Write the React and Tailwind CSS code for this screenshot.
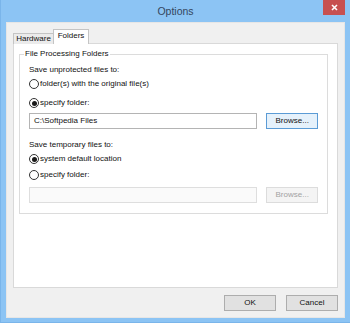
import { useState } from 'react';

function Radio({ checked, disabled, label }) {
  return (
    <div className="flex items-center h-[14px]">
      <span className="w-[10px] h-[10px] rounded-full border border-[#333] bg-white flex items-center justify-center shrink-0">
        {checked && <span className="w-[5px] h-[5px] rounded-full bg-[#1a1a1a]" />}
      </span>
      <span className={`ml-[1px] ${disabled ? 'text-[#8a8a8a]' : ''}`}>{label}</span>
    </div>
  );
}

function FolderRow({ value, disabled }) {
  return (
    <div className="flex items-center h-[16px]">
      <div
        className={`w-[230px] h-full border px-[4px] flex items-center ${
          disabled ? 'border-[#dedede] bg-[#fafafa]' : 'border-[#b4b4b4] bg-white'
        }`}
      >
        {value}
      </div>
      <button
        className={`ml-[9px] w-[52px] h-full border flex items-center justify-center ${
          disabled
            ? 'border-[#dcdcdc] bg-[#f4f4f4] text-[#a3a3a3]'
            : 'border-[#5b9bd5] bg-[#e5f1fb] text-[#111]'
        }`}
      >
        Browse...
      </button>
    </div>
  );
}

export default function App() {
  const [tab] = useState('folders');

  return (
    <div className="w-[350px] h-[323px] bg-[#8cc4f4] border-l border-b border-[#7ab5ea] flex flex-col font-['Liberation_Sans',Arial,sans-serif] text-[8px] text-[#111] leading-none overflow-hidden">
      {/* title bar */}
      <div className="h-[22px] relative flex items-center justify-center shrink-0">
        <span className="text-[10.5px] text-[#34465e]">Options</span>
        <button className="absolute top-0 right-[5px] w-[22px] h-[15px] bg-[#c75050] flex items-center justify-center">
          <svg width="7" height="7" viewBox="0 0 7 7">
            <path d="M1 1L6 6M6 1L1 6" stroke="white" strokeWidth="1.6" />
          </svg>
        </button>
      </div>

      {/* client area */}
      <div className="ml-[5px] mr-[5px] mb-[4px] flex-1 bg-[#f0f0f0] border border-[#e6e6e6] px-[6px] pt-[6px] flex flex-col">
        {/* tabs */}
        <div className="flex items-end h-[15px] relative z-10">
          <div className={`h-[11px] w-[41px] border border-b-0 border-[#c4c4c4] bg-[#ebebeb] flex items-center justify-center ${tab === 'hardware' ? 'bg-white' : ''}`}>
            Hardware
          </div>
          <div className="h-[15px] w-[36px] -ml-[1px] border border-b-0 border-[#c4c4c4] bg-white flex items-center justify-center pb-[2px]">
            Folders
          </div>
        </div>

        {/* tab panel */}
        <div className="-mt-[1px] h-[245px] w-[325px] bg-white border border-[#d9d9d9] px-[5px] pt-[10px]">
          <div className="relative border border-[#dcdcdc] h-[160px] w-[309px] px-[9px] pt-[8px]">
            <span className="absolute -top-[5px] left-[4px] bg-white px-[1px]">File Processing Folders</span>

            <div className="h-[14px] flex items-center">Save unprotected files to:</div>
            <Radio label="folder(s) with the original file(s)" />
            <div className="mt-[5px]">
              <Radio checked label="specify folder:" />
            </div>
            <div className="mt-[3px]">
              <FolderRow value="C:\Softpedia Files" />
            </div>

            <div className="mt-[9px] h-[14px] flex items-center">Save temporary files to:</div>
            <Radio checked label="system default location" />
            <div className="mt-[2px]">
              <Radio label="specify folder:" />
            </div>
            <div className="mt-[5px]">
              <FolderRow value="" disabled />
            </div>
          </div>
        </div>

        {/* buttons */}
        <div className="flex justify-end gap-[10px] mt-[7px]">
          <button className="w-[52px] h-[16px] border border-[#adadad] bg-[#e1e1e1] flex items-center justify-center">OK</button>
          <button className="w-[52px] h-[16px] border border-[#adadad] bg-[#e1e1e1] flex items-center justify-center">Cancel</button>
        </div>
      </div>
    </div>
  );
}
